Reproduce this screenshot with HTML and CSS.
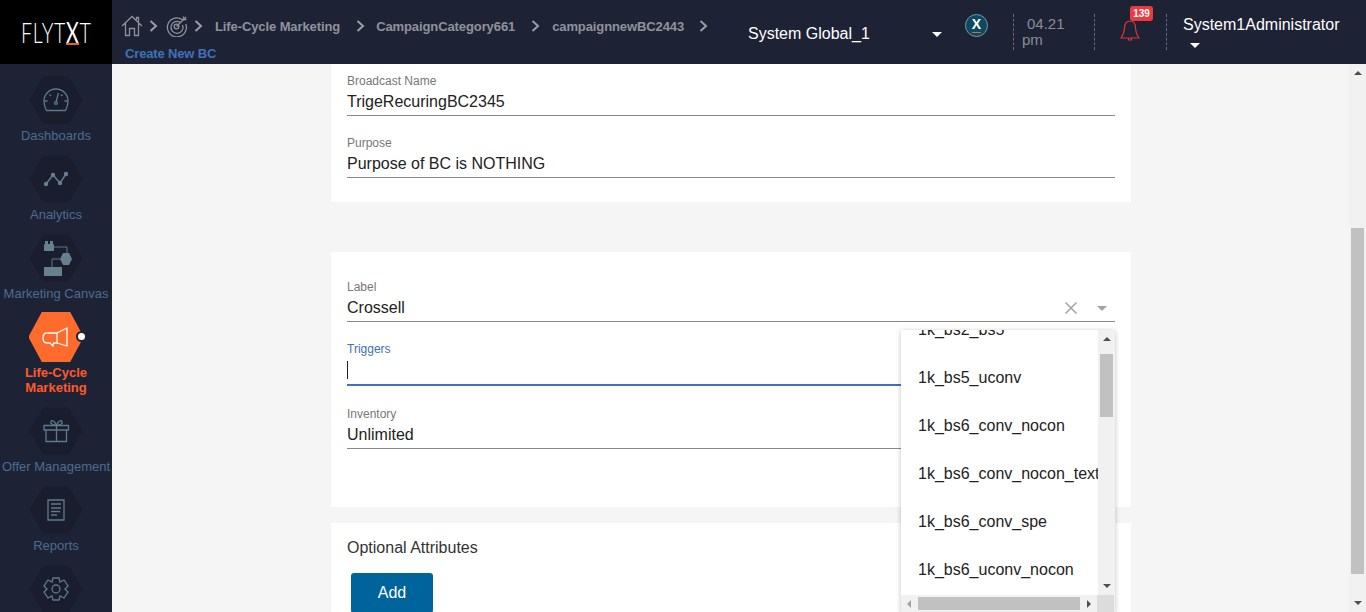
FILE: index.html
```html
<!DOCTYPE html>
<html lang="en">
<head>
    <meta charset="UTF-8">
    <meta name="viewport" content="width=device-width, initial-scale=1.0">
    <title>Create New BC</title>
    <link rel="stylesheet" href="styles.css">
</head>
<body>
    <header class="topbar">
        <div class="logo"><span class="logo-text">FLYT<span class="logo-x">X</span>T</span></div>
        <div class="crumbs">
            <div class="crumb-row">
                <svg class="crumb-icon" width="22" height="22" viewBox="0 0 22 22"><path d="M1 11 L11 1.5 L21 11 M4.5 8.5 V20.5 H8.5 V13.5 H13.5 V20.5 H17.5 V8.5 M15.5 6 V2.5 H17.5 V8" fill="none" stroke="#8d919c" stroke-width="1.3"/></svg>
                <svg class="chev" width="9" height="12" viewBox="0 0 9 12"><path d="M1.5 1 L7 6 L1.5 11" fill="none" stroke="#9a9da6" stroke-width="2"/></svg>
                <svg class="crumb-icon target" width="22" height="22" viewBox="0 0 22 22"><g fill="none" stroke="#8d919c" stroke-width="1.3"><path d="M17.5 5.5 A9.5 9.5 0 1 0 19.8 9"/><path d="M14.5 7.5 A6 6 0 1 0 16.5 10"/><circle cx="10.5" cy="11.5" r="2.4"/><path d="M10.5 11.5 L20 2 M17.5 1.5 V4.5 H20.5"/></g></svg>
                <svg class="chev" width="9" height="12" viewBox="0 0 9 12"><path d="M1.5 1 L7 6 L1.5 11" fill="none" stroke="#9a9da6" stroke-width="2"/></svg>
                <span class="crumb first">Life-Cycle Marketing</span>
                <svg class="chev" width="9" height="12" viewBox="0 0 9 12"><path d="M1.5 1 L7 6 L1.5 11" fill="none" stroke="#9a9da6" stroke-width="2"/></svg>
                <span class="crumb">CampaignCategory661</span>
                <svg class="chev" width="9" height="12" viewBox="0 0 9 12"><path d="M1.5 1 L7 6 L1.5 11" fill="none" stroke="#9a9da6" stroke-width="2"/></svg>
                <span class="crumb last">campaignnewBC2443</span>
                <svg class="chev" width="9" height="12" viewBox="0 0 9 12"><path d="M1.5 1 L7 6 L1.5 11" fill="none" stroke="#9a9da6" stroke-width="2"/></svg>
            </div>
            <div class="crumb-sub">Create New BC</div>
        </div>
        <div class="system">
            <span>System Global_1</span>
            <i class="caret"></i>
        </div>
        <div class="x-cell"><span class="x-badge"><span class="x-mark">X</span></span></div>
        <div class="time"><span class="time-num">04.21</span><span>pm</span></div>
        <div class="bell">
            <svg width="20" height="24" viewBox="0 0 20 24"><path d="M1 20 C3 17 4.500 14 4.500 10 C4.500 6 6.500 3 10 3 C13.500 3 15.500 6 15.500 10 C15.500 14 17 17 19 20 Z M8.500 20.500 V22 H11.500 V20.500" fill="none" stroke="#d8343c" stroke-width="1.2"/></svg>
            <span class="badge">139</span>
        </div>
        <div class="user">
            <span>System1Administrator</span>
            <i class="caret"></i>
        </div>
    </header>

    <div class="layout">
        <nav class="sidebar">
            <a class="nav-item">
                <svg class="hex" viewBox="0 0 54 48"><path class="hex-bg" d="M15 2 H39 L52 24 L39 46 H15 L2 24 Z"/><g class="ico"><path d="M17.500 34.500 Q15 30 15 25 A12 12 0 0 1 39 25 Q39 30 36.500 34.500 Z"/><path d="M27 26 L29.500 17 M18.500 25 H16 M38 25 H35.500 M20.500 18.500 L22 20 M33.500 18.500 L32 20"/><circle cx="27" cy="27" r="1.300"/></g></svg>
                <span>Dashboards</span>
            </a>
            <a class="nav-item">
                <svg class="hex" viewBox="0 0 54 48"><path class="hex-bg" d="M15 2 H39 L52 24 L39 46 H15 L2 24 Z"/><path class="line" d="M17 29 L24 20 L31 28 L37 19"/><g class="dots"><circle cx="17" cy="29" r="2.200"/><circle cx="24" cy="20" r="2.200"/><circle cx="31" cy="28" r="2.200"/><circle cx="37" cy="19" r="2.200"/></g></svg>
                <span>Analytics</span>
            </a>
            <a class="nav-item">
                <svg class="hex" viewBox="0 0 54 48"><path class="hex-bg" d="M15 2 H39 L52 24 L39 46 H15 L2 24 Z"/><path class="line thin" d="M25 13 H38 V19 M31 25 H23 V33"/><g class="dots"><rect x="15" y="10" width="10" height="7" rx="1"/><rect x="16" y="7" width="3" height="4"/><rect x="21" y="7" width="3" height="4"/><path d="M31 25 L34 19 H40 L43 25 L40 31 H34 Z"/><rect x="15" y="33" width="18" height="9"/></g></svg>
                <span>Marketing Canvas</span>
            </a>
            <a class="nav-item active">
                <svg class="hex" viewBox="0 0 54 50"><path class="hex-bg" d="M14 1 H40 L53 25 L40 49 H14 L1 25 Z"/><g class="ico-white"><path d="M18 21 H28 V31 H24.500 L24 34 L21 31 H18 Q14 31 14 26 Q14 21 18 21 Z"/><path d="M28 21 L38 16 V34 L28 31"/></g></svg>
                <span class="dot"></span>
                <span class="nav-label">Life-Cycle<br>Marketing</span>
            </a>
            <a class="nav-item">
                <svg class="hex" viewBox="0 0 54 48"><path class="hex-bg" d="M15 2 H39 L52 24 L39 46 H15 L2 24 Z"/><g class="ico"><path d="M15 18.500 H39.500 V23 H15 Z M17 23 V34.500 H37.500 V23 M27.500 18.500 V34.500"/><path d="M27.500 18.500 C24 18.500 21 16.500 22 14.500 C23 12.500 26 14.500 27.500 18.500 C29 14.500 32 12.500 33 14.500 C34 16.500 31 18.500 27.500 18.500 Z"/></g></svg>
                <span>Offer Management</span>
            </a>
            <a class="nav-item">
                <svg class="hex" viewBox="0 0 54 48"><path class="hex-bg" d="M15 2 H39 L52 24 L39 46 H15 L2 24 Z"/><g class="ico"><path d="M19 14 H35 V34 H19 Z M22 18 H32 M22 22 H32 M22 25.500 H31 M22 29 H28"/></g></svg>
                <span>Reports</span>
            </a>
            <a class="nav-item">
                <svg class="hex" viewBox="0 0 54 48"><path class="hex-bg" d="M15 2 H39 L52 24 L39 46 H15 L2 24 Z"/><g class="ico"><path d="M24 13 H30 L31 17 L35 15 L39 21 L36 24 L39 27 L35 33 L31 31 L30 35 H24 L23 31 L19 33 L15 27 L18 24 L15 21 L19 15 L23 17 Z"/><circle cx="27" cy="24" r="4"/></g></svg>
            </a>
        </nav>

        <main class="content">
            <section class="card card-basic">
                <div class="field">
                    <label>Broadcast Name</label>
                    <div class="value">TrigeRecuringBC2345</div>
                </div>
                <div class="field">
                    <label>Purpose</label>
                    <div class="value">Purpose of BC is NOTHING</div>
                </div>
            </section>

            <section class="card card-label">
                <div class="field">
                    <label>Label</label>
                    <div class="value value-select">
                        <span>Crossell</span>
                        <svg class="clear" width="14" height="14" viewBox="0 0 14 14"><path d="M1.500 1.500 L12.500 12.500 M12.500 1.500 L1.500 12.500" stroke="#a3a3a3" stroke-width="1.500"/></svg>
                        <i class="caret caret-grey"></i>
                    </div>
                </div>
                <div class="field focused">
                    <label>Triggers</label>
                    <div class="value"><span class="cursor"></span></div>
                </div>
                <div class="field">
                    <label>Inventory</label>
                    <div class="value">Unlimited</div>
                </div>

                <div class="dropdown">
                    <div class="dropdown-main">
                        <ul class="options">
                            <li>1k_bs2_bs5</li>
                            <li>1k_bs5_uconv</li>
                            <li>1k_bs6_conv_nocon</li>
                            <li>1k_bs6_conv_nocon_text</li>
                            <li>1k_bs6_conv_spe</li>
                            <li>1k_bs6_uconv_nocon</li>
                        </ul>
                        <div class="vbar small">
                            <i class="arrow up"></i>
                            <div class="vtrack"><div class="vthumb"></div></div>
                            <i class="arrow down"></i>
                        </div>
                    </div>
                    <div class="hbar">
                        <i class="arrow left"></i>
                        <div class="hthumb"></div>
                        <i class="arrow right"></i>
                        <div class="corner"></div>
                    </div>
                </div>
            </section>

            <section class="card card-optional">
                <h3>Optional Attributes</h3>
                <button type="button" class="add-btn">Add</button>
            </section>
        </main>

        <div class="vbar page">
            <i class="arrow up"></i>
            <div class="vtrack"><div class="vthumb"></div></div>
            <i class="arrow down"></i>
        </div>
    </div>
</body>
</html>
```

FILE: styles.css
```css
* {
    box-sizing: border-box;
}

html, body {
    height: 100%;
}

body {
    margin: 0;
    overflow: hidden;
    font-family: "Liberation Sans", Arial, sans-serif;
    background-color: #f5f5f5;
    color: #222;
}

/* top bar */
.topbar {
    display: flex;
    height: 64px;
    background-color: #1e2235;
}

.logo {
    width: 112px;
    height: 64px;
    flex-shrink: 0;
    background-color: #000;
    color: #fff;
    font-family: Lato, sans-serif;
    font-weight: 300;
    font-size: 28px;
    line-height: 64px;
    text-align: center;
    white-space: nowrap;
}

.logo-text {
    display: inline-block;
    transform: scaleX(0.7);
    letter-spacing: 1px;
}

.logo-x {
    display: inline-block;
    font-weight: 400;
    line-height: 21px;
    border-bottom: 2px solid #e0662b;
}

.crumbs {
    width: 636px;
    padding: 15px 0 0 9px;
}

.crumb-row {
    display: flex;
    align-items: center;
    height: 22px;
    white-space: nowrap;
}

.crumb-icon.target {
    margin-left: 8px;
}

.chev {
    margin-left: 6px;
    flex-shrink: 0;
}

.crumb {
    font-size: 13px;
    font-weight: 700;
    letter-spacing: -0.1px;
    color: #8f929c;
    margin: 0 16px 0 11px;
}

.crumb.first, .crumb.last {
    margin-left: 12px;
}

.crumb.last {
    margin-right: 15px;
}

.crumb + .chev {
    margin-left: 0;
}

.crumb-sub {
    margin: 9px 0 0 4px;
    font-size: 13px;
    font-weight: 700;
    letter-spacing: -0.15px;
    color: #3f72b8;
}

.system {
    width: 200px;
    padding: 25px 6px 0 0;
    display: flex;
    justify-content: space-between;
    color: #fff;
    font-size: 16px;
}

.system .caret {
    margin-top: 7px;
}

.caret {
    display: inline-block;
    width: 0;
    height: 0;
    border-left: 5px solid transparent;
    border-right: 5px solid transparent;
    border-top: 5px solid #fff;
}

.x-cell {
    width: 65px;
    padding: 14px 0 0 17px;
}

.x-badge {
    display: block;
    width: 23px;
    height: 23px;
    border-radius: 50%;
    background-color: #10495f;
    border: 1px solid #6f9aa8;
    text-align: center;
}

.x-mark {
    display: inline-block;
    color: #fff;
    font-size: 14px;
    font-weight: 700;
    line-height: 15px;
    margin-top: 2px;
    border-bottom: 1px solid #e0662b;
}

.time {
    width: 82px;
    height: 36px;
    margin-top: 14px;
    padding: 2px 0 0 8px;
    border-left: 1px dashed #666a77;
    border-right: 1px dashed #666a77;
    display: flex;
    flex-direction: column;
    font-size: 15px;
    color: #8a8d96;
    line-height: 16px;
}

.time-num {
    margin-left: 5px;
}

.bell {
    position: relative;
    width: 71px;
    padding: 18px 0 0 25px;
}

.badge {
    position: absolute;
    left: 35px;
    top: 6px;
    width: 23px;
    height: 15px;
    background-color: #ed3a41;
    border-radius: 3px;
    color: #fff;
    font-size: 10px;
    font-weight: 700;
    text-align: center;
    line-height: 15px;
}

.user {
    height: 36px;
    margin-top: 14px;
    padding: 1px 0 0 16px;
    border-left: 1px dashed #666a77;
    color: #fff;
    font-size: 16px;
    line-height: 20px;
    white-space: nowrap;
}

.user .caret {
    display: block;
    margin: 8px 0 0 7px;
}

/* page body */
.layout {
    display: flex;
    height: 548px;
}

.sidebar {
    width: 112px;
    padding-top: 12px;
    background-color: #1e2235;
    overflow: hidden;
    flex-shrink: 0;
}

.nav-item {
    position: relative;
    display: block;
    height: 79px;
    text-align: center;
    font-size: 13px;
    line-height: 16px;
    color: #4d6c8e;
    white-space: nowrap;
}

.nav-item span {
    display: block;
    margin-top: 4px;
}

.hex {
    display: block;
    width: 54px;
    height: 48px;
    margin: 0 auto;
}

.hex-bg {
    fill: #1a1d2d;
    stroke: #1a1d2d;
    stroke-width: 3;
    stroke-linejoin: round;
}

.ico path, .ico circle {
    fill: none;
    stroke: #5f7a88;
    stroke-width: 1.3;
}

.line {
    fill: none;
    stroke: #5f7a88;
    stroke-width: 1.5;
}

.line.thin {
    stroke-width: 1;
}

.dots {
    fill: #66808e;
}

.nav-item.active {
    height: 95px;
    margin-top: -1px;
    color: #ff5a2b;
    font-weight: 700;
    line-height: 15px;
}

.nav-item.active .hex {
    height: 50px;
}

.nav-item.active .nav-label {
    margin-top: 3px;
}

.nav-item.active .hex-bg {
    fill: #ff6b2c;
    stroke: #ff6b2c;
}

.ico-white path {
    fill: none;
    stroke: #fff;
    stroke-width: 1.3;
    stroke-linejoin: round;
}

.nav-item .dot {
    position: absolute;
    left: 76px;
    top: 19px;
    width: 7px;
    height: 7px;
    margin: 0;
    background-color: #fff;
    border: 2.500px solid #1e2235;
    border-radius: 50%;
    box-sizing: content-box;
}

/* main column */
.content {
    flex: 1;
    overflow: hidden;
    padding: 0 218px 0 219px;
}

.card {
    position: relative;
    background-color: #fff;
    padding: 0 16px;
}

.card-basic {
    height: 138px;
    padding-top: 10px;
    margin-bottom: 50px;
}

.card-label {
    height: 255px;
    padding-top: 28px;
    margin-bottom: 16px;
}

.card-optional {
    height: 200px;
    padding-top: 15px;
}

.card-optional h3 {
    margin: 0;
    font-size: 16px;
    font-weight: 400;
    line-height: 20px;
    color: #333;
}

.field {
    height: 62px;
}

.card-label .field.focused {
    height: 65px;
}

.field label {
    display: block;
    font-size: 12px;
    line-height: 14px;
    color: #777;
}

.value {
    height: 28px;
    padding-top: 4px;
    font-size: 16px;
    line-height: 20px;
    color: #222;
    border-bottom: 1px solid #888;
}

.value-select {
    display: flex;
    align-items: flex-start;
}

.value-select span {
    flex: 1;
}

.clear {
    margin: 3px 19px 0 0;
}

.caret-grey {
    margin: 8px 8px 0 0;
    border-top-color: #a3a3a3;
}

.focused label {
    color: #3f72b8;
}

.card-label .focused .value {
    height: 30px;
    padding-top: 5px;
    border-bottom: 2px solid #3f72b8;
}

.cursor {
    display: block;
    width: 1px;
    height: 18px;
    background-color: #222;
}

.add-btn {
    display: block;
    width: 82px;
    height: 40px;
    margin: 15px 0 0 4px;
    background-color: #00649c;
    border: none;
    border-radius: 3px;
    color: #fff;
    font-family: inherit;
    font-size: 16px;
}

/* triggers dropdown */
.dropdown {
    position: absolute;
    top: 78px;
    right: 16px;
    width: 214px;
    height: 282px;
    background-color: #fff;
    box-shadow: 0 1px 5px rgba(0, 0, 0, 0.25);
    z-index: 5;
    display: flex;
    flex-direction: column;
}

.dropdown-main {
    display: flex;
    height: 265px;
}

.options {
    flex: 1;
    list-style: none;
    margin: 0;
    padding: 0;
    overflow: hidden;
}

.options li {
    height: 48px;
    padding-left: 17px;
    font-size: 16px;
    line-height: 48px;
    white-space: nowrap;
    color: #222;
}

.options li:first-child {
    margin-top: -24px;
}

.vbar {
    width: 17px;
    flex-shrink: 0;
    background-color: #f1f1f1;
    display: flex;
    flex-direction: column;
    align-items: center;
}

.vbar.page {
    height: 548px;
}

.vtrack {
    flex: 1;
    width: 100%;
    padding: 0 2px;
}

.vthumb {
    width: 13px;
    background-color: #c1c1c1;
}

.small .vthumb {
    height: 63px;
    margin-top: 7px;
}

.page .vthumb {
    height: 346px;
    margin-top: 147px;
}

.arrow {
    display: block;
    width: 0;
    height: 0;
    border: 4px solid transparent;
    flex-shrink: 0;
}

.arrow.up {
    border-top: none;
    border-bottom: 4px solid #505050;
    margin: 7px 0 6px;
}

.arrow.down {
    border-bottom: none;
    border-top: 4px solid #505050;
    margin: 6px 0 7px;
}

.hbar {
    height: 17px;
    background-color: #f1f1f1;
    display: flex;
    align-items: center;
}

.arrow.left {
    border-left: none;
    border-right: 4px solid #a3a3a3;
    margin-left: 6px;
}

.hthumb {
    width: 162px;
    height: 13px;
    margin-left: 7px;
    background-color: #c1c1c1;
}

.arrow.right {
    border-right: none;
    border-left: 4px solid #505050;
    margin-left: 7px;
}

.corner {
    width: 17px;
    height: 17px;
    margin-left: 6px;
    background-color: #dcdcdc;
}
```
